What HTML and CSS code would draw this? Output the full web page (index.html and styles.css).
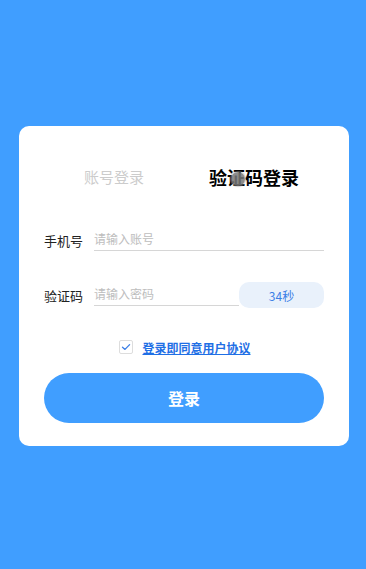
FILE: index.html
```html
<!DOCTYPE html>
<html lang="zh">

<head>
    <meta charset="UTF-8">
    <meta name="viewport" content="width=device-width, initial-scale=1.0">
    <title>登录</title>
    <link rel="stylesheet" href="styles.css">
</head>

<body>

    <div class="login-card">
        <div class="tabs">
            <div class="tab">账号登录</div>
            <div class="tab active">验证码登录</div>
        </div>

        <div class="form-row phone-row">
            <label class="form-label">手机号</label>
            <input class="form-input" type="text" placeholder="请输入账号">
        </div>

        <div class="form-row code-row">
            <label class="form-label">验证码</label>
            <input class="form-input" type="text" placeholder="请输入密码">
            <button class="code-btn" type="button">34秒</button>
        </div>

        <div class="agree-row">
            <span class="checkbox">
                <svg width="10" height="10" viewBox="0 0 10 10">
                    <path d="M1.5 5.2 L4 7.4 L8.6 2.6" fill="none" stroke="#3b7fe6" stroke-width="1.3"
                        stroke-linecap="round" stroke-linejoin="round" />
                </svg>
            </span>
            <a class="agree-link" href="#">登录即同意用户协议</a>
        </div>

        <button class="login-btn" type="button">登录</button>

        <!-- touch indicator from the capture -->
        <span class="touch-dot"></span>
    </div>

</body>

</html>
```

FILE: styles.css
```css
body {
    margin: 0;
    background-color: #409eff;
    font-family: "Noto Sans CJK SC", "Noto Sans", sans-serif;
    height: 569px;
    overflow: hidden;
}

.login-card {
    position: relative;
    margin: 126px 17px 0 19px;
    background-color: #ffffff;
    border-radius: 10px;
    padding: 36px 25px 23px;
}

.tabs {
    display: flex;
    height: 30px;
    align-items: center;
}

.tab {
    flex: 1;
    text-align: center;
    font-size: 15px;
    color: #cccccc;
    line-height: 30px;
}

.tab.active {
    font-size: 18px;
    font-weight: bold;
    color: #000000;
}

.form-row {
    display: flex;
    align-items: center;
}

.phone-row {
    margin-top: 37px;
}

.code-row {
    margin-top: 31px;
}

.form-label {
    width: 39px;
    margin-right: 11px;
    font-size: 13px;
    color: #222222;
    white-space: nowrap;
}

.form-input {
    flex: 1;
    min-width: 0;
    height: 22px;
    box-sizing: border-box;
    border: none;
    border-bottom: 1px solid #d6d6d6;
    padding: 0 0 2px;
    font-family: inherit;
    font-size: 12px;
    outline: none;
    background: transparent;
}

.form-input::placeholder {
    color: #bdbdbd;
}

.code-btn {
    width: 85px;
    height: 26px;
    border: none;
    border-radius: 10px;
    background-color: #e9f1fb;
    color: #3b7fe6;
    font-family: inherit;
    font-size: 12px;
    padding: 0;
}

.agree-row {
    display: flex;
    justify-content: center;
    align-items: center;
    gap: 9px;
    margin-top: 32px;
    height: 14px;
    padding-left: 2px;
}

.checkbox {
    width: 14px;
    height: 14px;
    box-sizing: border-box;
    border: 1px solid #dddddd;
    border-radius: 2px;
    display: flex;
    align-items: center;
    justify-content: center;
}

.agree-link {
    font-size: 12px;
    font-weight: bold;
    color: #1f6fe5;
    text-decoration: underline;
}

.login-btn {
    display: block;
    width: 100%;
    height: 50px;
    margin-top: 19px;
    border: none;
    border-radius: 25px;
    background-color: #409eff;
    color: #ffffff;
    font-family: inherit;
    font-size: 16px;
    font-weight: bold;
}

.touch-dot {
    position: absolute;
    left: 212px;
    top: 46px;
    width: 14px;
    height: 14px;
    border-radius: 50%;
    background-color: rgba(120, 120, 120, 0.85);
    box-shadow: 0 0 1px 1px rgba(160, 160, 160, 0.5);
}
```
